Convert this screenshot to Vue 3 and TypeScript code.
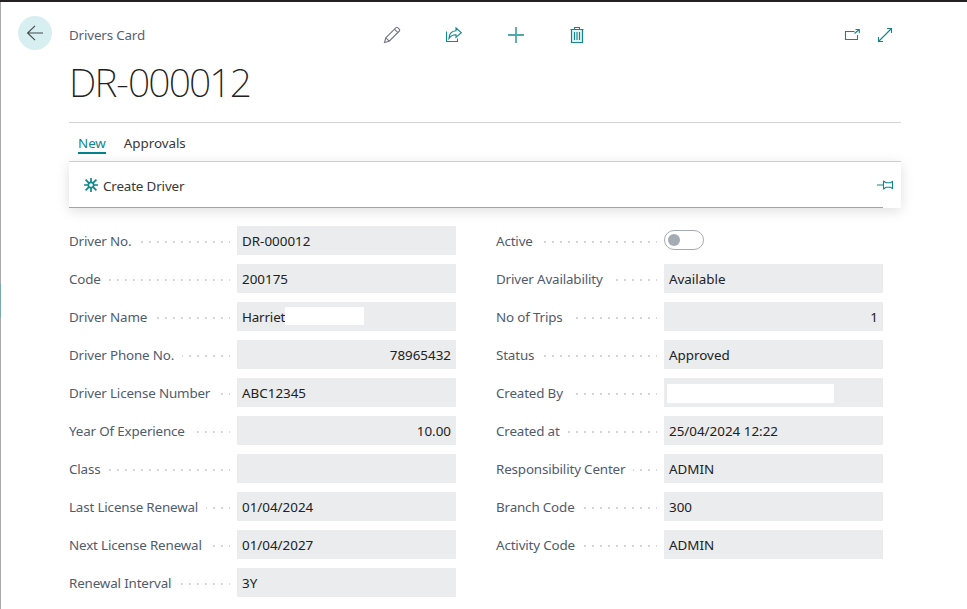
<script setup lang="ts">
import { ref } from 'vue'

interface Field {
  label: string
  value?: string
  kind?: 'number' | 'toggle'
  mask?: 'name' | 'user'
}

const tabs = ['New', 'Approvals']
const activeTab = ref('New')
const active = ref(false)

const columns: Field[][] = [
  [
    { label: 'Driver No.', value: 'DR-000012' },
    { label: 'Code', value: '200175' },
    { label: 'Driver Name', value: 'Harriet', mask: 'name' },
    { label: 'Driver Phone No.', value: '78965432', kind: 'number' },
    { label: 'Driver License Number', value: 'ABC12345' },
    { label: 'Year Of Experience', value: '10.00', kind: 'number' },
    { label: 'Class' },
    { label: 'Last License Renewal', value: '01/04/2024' },
    { label: 'Next License Renewal', value: '01/04/2027' },
    { label: 'Renewal Interval', value: '3Y' },
  ],
  [
    { label: 'Active', kind: 'toggle' },
    { label: 'Driver Availability', value: 'Available' },
    { label: 'No of Trips', value: '1', kind: 'number' },
    { label: 'Status', value: 'Approved' },
    { label: 'Created By', mask: 'user' },
    { label: 'Created at', value: '25/04/2024 12:22' },
    { label: 'Responsibility Center', value: 'ADMIN' },
    { label: 'Branch Code', value: '300' },
    { label: 'Activity Code', value: 'ADMIN' },
  ],
]
</script>

<template>
  <div class="window">
    <div class="edge">
      <i class="edge-active"></i>
    </div>
    <aside class="rail">
      <button class="back">
        <svg width="34" height="34" viewBox="0 0 34 34"><path d="M25 17H9.5M17 9.8L9.6 17L17 24.2" /></svg>
      </button>
    </aside>
    <main class="page">
      <header class="topbar">
        <span class="caption">Drivers Card</span>
        <nav class="tools">
          <svg class="pencil" width="18" height="18" viewBox="0 0 18 18">
            <path d="M1.5 16.5l1.3-4.7L13 1.6q.8-.7 1.7 0l1.7 1.7q.7.9 0 1.7L6.2 15.2zM2.8 11.8l3.4 3.4M11.4 3.2l3.4 3.4" />
          </svg>
          <svg width="18" height="18" viewBox="0 0 18 18">
            <path d="M1.5 5.5V15.5H12.5V12.5M11 2l5.3 4.7L11 11.3V8.8C7.7 8.7 5.7 10 4 12.5C4.2 8 6.8 5 11 4.8z" />
          </svg>
          <svg class="plus" width="18" height="18" viewBox="0 0 18 18"><path d="M9 1v16M1 9h16" /></svg>
          <svg class="trash" width="18" height="18" viewBox="0 0 18 18">
            <path class="tint" d="M3.5 3.5h11v13h-11z" />
            <path d="M2.5 3.5h13M6.5 3.5v-2h5v2M3.5 3.5v13h11v-13M6.5 6v8M9 6v8M11.5 6v8" />
          </svg>
        </nav>
        <nav class="view">
          <svg width="18" height="18" viewBox="0 0 18 18">
            <path d="M11.5 5.5h-9v8h12V9M11.5 7.5L16.3 3.5M12.5 3.5h3.8v3.8" />
          </svg>
          <svg width="18" height="18" viewBox="0 0 18 18">
            <path d="M2.5 15.5L15.5 2.5M11 2.5h4.5V7M2.5 11v4.5H7" />
          </svg>
        </nav>
      </header>
      <h1>DR<span class="dash">-</span>000012</h1>
      <nav class="tabs">
        <button
          v-for="tab in tabs"
          :key="tab"
          :class="['tab', { current: tab === activeTab }]"
          @click="activeTab = tab"
        >{{ tab }}</button>
      </nav>
      <section class="actions">
        <button class="action">
          <svg class="spark" width="14" height="14" viewBox="0 0 14 14">
            <circle cx="7" cy="7" r="2.7" />
            <path d="M7 0v4M7 10V14M0 7h4M10 7H14M1.6 1.6l3.2 3.2M9.2 9.2L12.4 12.4M12.4 1.6L9.2 4.8M4.8 9.2L1.6 12.4" />
          </svg>
          <span>Create Driver</span>
        </button>
        <svg class="pin" width="17" height="10" viewBox="0 0 17 10">
          <path d="M0 5h6.5M6.5.5v9M6.5 1L9 2.8h4.5L15.5 1.5v7L13.5 7.2H9L6.5 9" />
        </svg>
      </section>
      <section class="fields">
        <div v-for="(column, c) in columns" :key="c" class="column">
          <div v-for="field in column" :key="field.label" class="field">
            <div class="label">
              <span>{{ field.label }}</span>
              <i class="leader"></i>
            </div>
            <button
              v-if="field.kind === 'toggle'"
              :class="['toggle', { on: active }]"
              role="switch"
              :aria-checked="active"
              @click="active = !active"
            ><i class="knob"></i></button>
            <div v-else :class="['value', field.kind, { tight: field.mask === 'name' }]">
              <span v-if="field.value">{{ field.value }}</span>
              <i v-if="field.mask" :class="['mask', field.mask]"></i>
            </div>
          </div>
        </div>
      </section>
    </main>
  </div>
</template>

<style>
body {
  margin: 0;
  background: #fff;
  overflow: hidden;
}
</style>

<style scoped>
* {
  box-sizing: border-box;
}

.window {
  display: flex;
  height: 609px;
  border-top: 2px solid #242122;
  background: #fff;
  color: #212121;
  font: 14px/20px "Noto Sans", "Open Sans", sans-serif;
  overflow: hidden;
}

button {
  padding: 0;
  border: 0;
  background: none;
  color: inherit;
  font: inherit;
  letter-spacing: inherit;
}

svg {
  display: block;
  flex: none;
  fill: none;
  stroke: #11868b;
  stroke-width: 1.1;
}

.edge {
  width: 1px;
  padding-top: 282px;
  background: #aaa8aa;
}

.edge-active {
  display: block;
  height: 33px;
  background: #78aaa9;
}

.rail {
  width: 68px;
  padding: 14px 0 0 17px;
}

.back {
  display: block;
  width: 34px;
  height: 34px;
  border-radius: 50%;
  background: #d8eff1;
}

.back svg {
  stroke: #424a4c;
}

.page {
  width: 832px;
}

.topbar {
  display: flex;
  align-items: center;
  height: 66px;
}

.caption {
  width: 314px;
  color: #566172;
  font-size: 13.4px;
  letter-spacing: -0.17px;
}

.tools {
  display: flex;
  gap: 44px;
}

.pencil {
  stroke: #737781;
}

.plus {
  stroke: #4fa7aa;
  stroke-width: 1.8;
}

.trash {
  margin-left: -1px;
}

.tint {
  fill: #e3f2f2;
}

.view {
  display: flex;
  gap: 15px;
  margin-left: auto;
  padding-right: 7px;
}

h1 {
  height: 54px;
  margin: 0;
  font: 200 39px/28px "Noto Sans", "Open Sans", sans-serif;
  letter-spacing: -1.9px;
}

.dash {
  padding: 0 1px;
}

.tabs {
  display: flex;
  gap: 18px;
  height: 39px;
  padding: 10px 9px 0;
  border-top: 1px solid #d3d3d5;
  color: #383838;
  font-size: 13.4px;
  letter-spacing: -0.05px;
}

.tab {
  height: 21px;
  border-bottom: 2px solid transparent;
  line-height: 20px;
}

.tab.current {
  border-color: #00838a;
  color: #11868b;
}

.actions {
  display: flex;
  align-items: center;
  justify-content: space-between;
  height: 47px;
  padding: 2px 7px 0 15px;
  border-top: 1px solid #cfcfd1;
  background: linear-gradient(#9fa3ae, #9fa3ae) 0 100% / 814px 1px no-repeat #fff;
  box-shadow: 0 3px 12px rgba(0, 0, 0, 0.13);
  color: #383838;
  font-size: 13.4px;
  letter-spacing: -0.15px;
}

.action {
  display: flex;
  align-items: center;
  gap: 5px;
}

.spark {
  margin-bottom: 2px;
  stroke-width: 1.7;
}

.pin {
  margin-bottom: 2px;
}

.fields {
  display: grid;
  grid-template-columns: 387px 387px;
  gap: 40px;
  padding-top: 18px;
  font-size: 13.4px;
}

.column {
  display: flex;
  flex-direction: column;
  gap: 9px;
}

.field {
  display: flex;
  height: 29px;
}

.label {
  display: flex;
  width: 168px;
  padding-right: 7px;
  color: #505c6d;
  line-height: 30px;
  letter-spacing: -0.16px;
  white-space: nowrap;
}

.leader {
  flex: 1;
  height: 2px;
  margin: 15px 0 0 8px;
  background: repeating-linear-gradient(to left, #d4d6d9 0 1px, transparent 1px 7px, #d4d6d9 7px 8px);
}

.value {
  display: flex;
  width: 219px;
  padding: 0 5px;
  background: #ebecee;
  line-height: 30px;
  white-space: nowrap;
}

.value.number {
  justify-content: flex-end;
}

.value.tight {
  letter-spacing: -0.16px;
}

.mask {
  background: #fff;
}

.mask.name {
  width: 79px;
  height: 18px;
  margin-top: 5px;
}

.mask.user {
  width: 167px;
  height: 19px;
  margin: 6px 0 0 -2px;
}

.toggle {
  display: flex;
  align-items: center;
  width: 40px;
  height: 20px;
  margin-top: 4px;
  padding: 0 3px;
  border: 1px solid #a5abb5;
  border-radius: 10px;
}

.toggle.on {
  justify-content: flex-end;
}

.knob {
  width: 12px;
  height: 12px;
  border-radius: 50%;
  background: #a5abb5;
}
</style>
